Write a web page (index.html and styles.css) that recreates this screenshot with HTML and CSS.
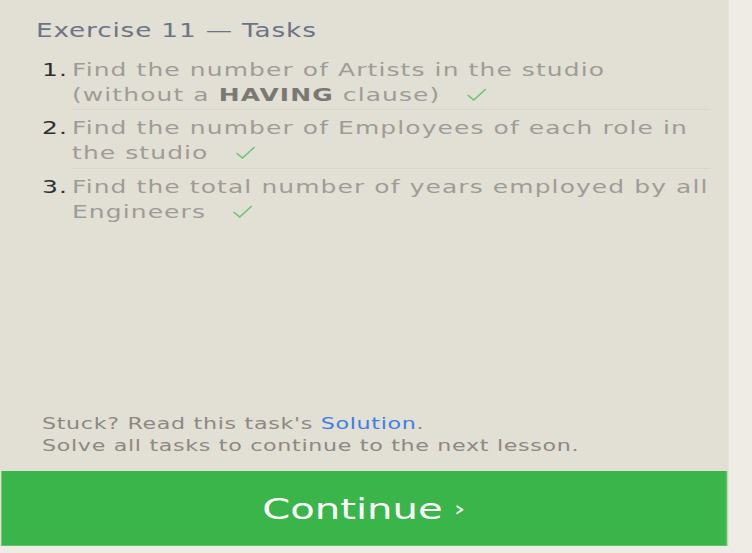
FILE: index.html
```html
<!DOCTYPE html>
<html>
<head>
<meta charset="utf-8">
<link rel="stylesheet" href="styles.css">
</head>
<body>
<div class="panel">
  <div class="content">
    <h2 class="title">Exercise 11 — Tasks</h2>
    <ol class="tasks">
      <li class="task"><span class="num">1.</span><span class="text">Find the number of Artists in the studio<br>(without a <b>HAVING</b> clause)<svg class="check" viewBox="0 0 20 14" preserveAspectRatio="none"><path d="M1 7.5 L7 13 L19 1" fill="none" stroke="#6cc474" stroke-width="1.5"/></svg></span></li>
      <li class="task"><span class="num">2.</span><span class="text">Find the number of Employees of each role in<br>the studio<svg class="check" viewBox="0 0 20 14" preserveAspectRatio="none"><path d="M1 7.5 L7 13 L19 1" fill="none" stroke="#6cc474" stroke-width="1.5"/></svg></span></li>
      <li class="task"><span class="num">3.</span><span class="text">Find the total number of years employed by all<br>Engineers<svg class="check" viewBox="0 0 20 14" preserveAspectRatio="none"><path d="M1 7.5 L7 13 L19 1" fill="none" stroke="#6cc474" stroke-width="1.5"/></svg></span></li>
    </ol>
  </div>
  <div class="footer">
    <p class="note">Stuck? Read this task's <a class="link" href="#">Solution</a>.</p>
    <p class="note">Solve all tasks to continue to the next lesson.</p>
  </div>
  <div class="continue">Continue <span class="chev">›</span></div>
</div>
</body>
</html>
```
FILE: styles.css
```css
html, body {
  margin: 0;
  padding: 0;
  background: #efece5;
}
body {
  width: 752px;
  height: 553px;
  overflow: hidden;
  font-family: "DejaVu Sans", "Open Sans", sans-serif;
}
/* the whole card is rendered horizontally stretched, as in the reference */
.panel {
  width: 525.6px;
  height: 546px;
  background: #e2dfd5;
  display: flex;
  flex-direction: column;
  transform: scaleX(1.385);
  transform-origin: 0 0;
}
.content {
  flex: 1;
  padding: 16px 0 0 26px;
}
.title {
  margin: 0;
  font-size: 19px;
  font-weight: 400;
  color: #6d7584;
  letter-spacing: 0.6px;
  line-height: 28px;
}
.tasks {
  list-style: none;
  margin: 7.5px 0 0 0;
  padding: 0 0 0 4.3px;
}
.task {
  display: flex;
  width: 483px;
  font-size: 18px;
  line-height: 25px;
  letter-spacing: 0.8px;
}
.num {
  width: 21.7px;
  flex: none;
  padding-top: 5px;
  color: #2f2f2f;
}
.text {
  flex: 1;
  padding: 5px 0 2.5px 0;
  color: #9f9c96;
}
.task:not(:last-child) .text {
  border-bottom: 1px solid #d8d5cb;
}
.text b {
  color: #7a7873;
  font-weight: 700;
}
.check {
  width: 14.5px;
  height: 13px;
  margin-left: 19.5px;
  vertical-align: baseline;
}
.footer {
  padding: 0 0 14px 30.3px;
}
.note {
  margin: 0;
  font-size: 16px;
  line-height: 22px;
  letter-spacing: 0.5px;
  color: #8d8881;
}
.link {
  color: #3d7ee6;
  text-decoration: none;
}
.continue {
  margin: 0 0.7px 0 1.45px;
  height: 72px;
  padding-top: 2px;
  background: #39b54a;
  border-right: 1px solid #5cc266;
  border-bottom: 1px solid #5cc266;
  color: #ffffff;
  font-size: 29px;
  letter-spacing: 0;
  display: flex;
  align-items: center;
  justify-content: center;
}
.chev {
  font-size: 21px;
  margin-left: 8px;
}
```
